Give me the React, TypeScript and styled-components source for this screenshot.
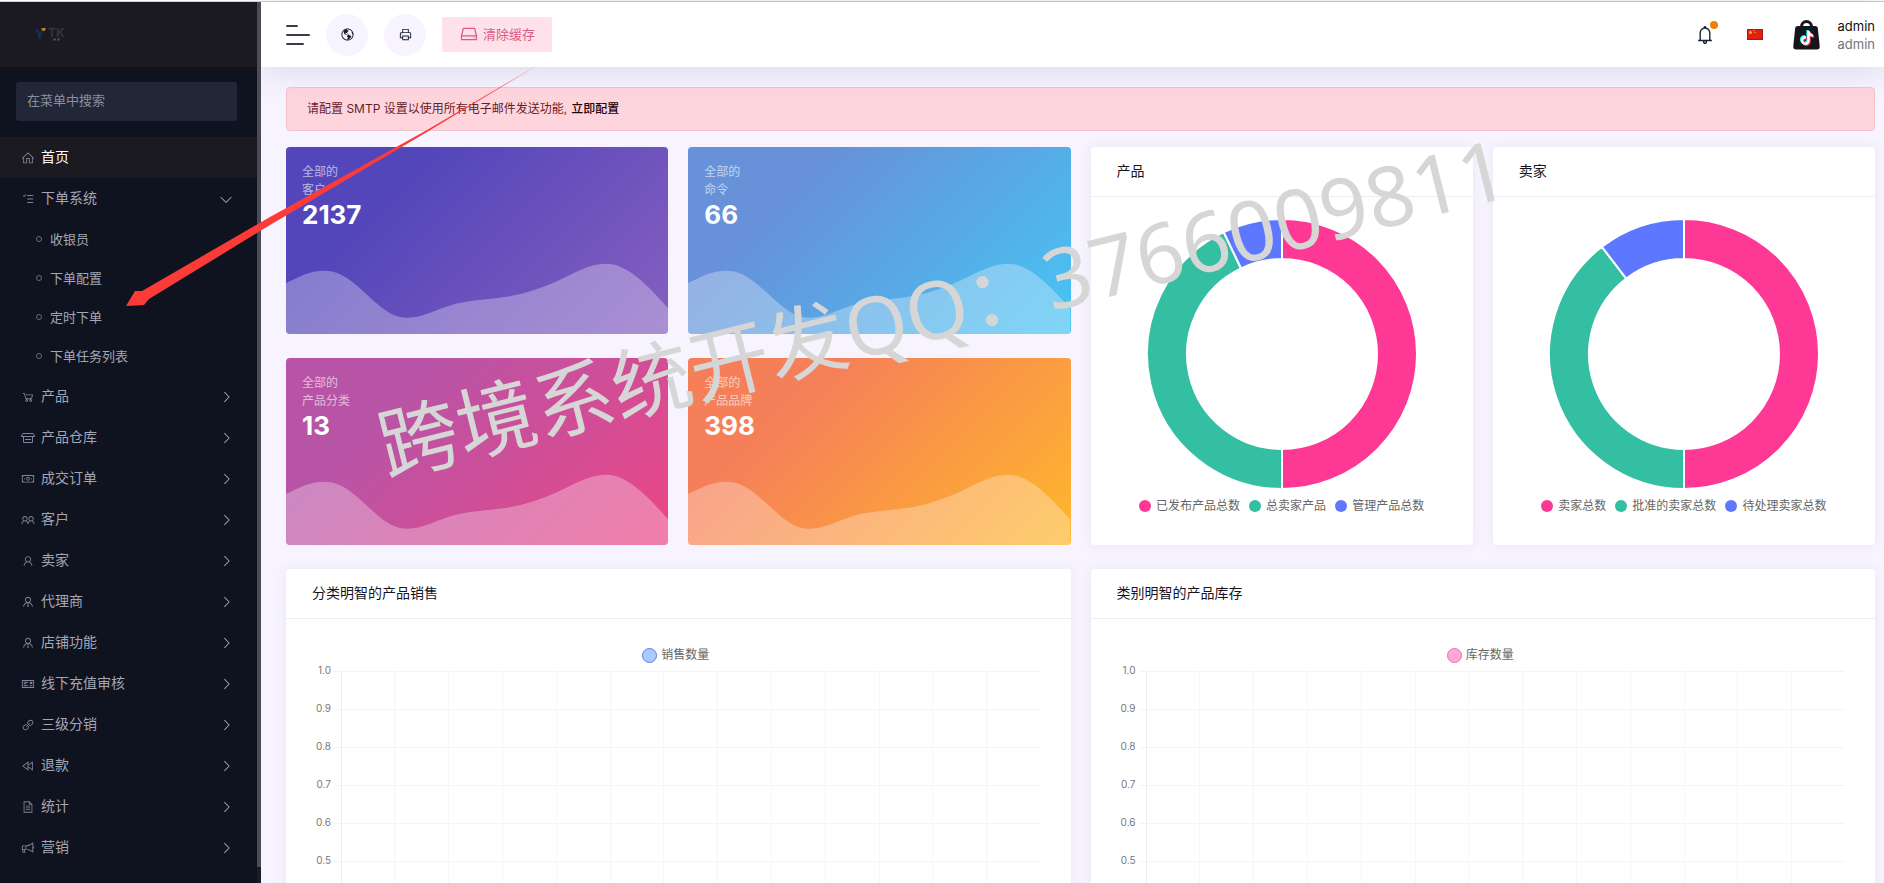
import React from "react";
import styled, { createGlobalStyle } from "styled-components";
import type { IconType } from "react-icons";
import { FaTiktok } from "react-icons/fa6";
import {
  LiaAngleDownSolid,
  LiaAngleRightSolid,
  LiaBackwardSolid,
  LiaBell,
  LiaBullhornSolid,
  LiaFileAltSolid,
  LiaGlobeAmericasSolid,
  LiaHddSolid,
  LiaHomeSolid,
  LiaLinkSolid,
  LiaMoneyBillSolid,
  LiaMoneyCheckSolid,
  LiaPrintSolid,
  LiaShoppingCartSolid,
  LiaTasksSolid,
  LiaUserFriendsSolid,
  LiaUserSolid,
  LiaUserTieSolid,
} from "react-icons/lia";

const GlobalStyle = createGlobalStyle`
  *, *::before, *::after { box-sizing: border-box; }
  body {
    margin: 0;
    background: #f7f4ff;
    color: #1b1b28;
    font: 400 12px/18px Inter, "Noto Sans CJK SC", sans-serif;
  }
  button, input { font: inherit; }
  a { color: inherit; text-decoration: none; }
  ul { list-style: none; margin: 0; padding: 0; }
  h2, p { margin: 0; font: inherit; }
`;

const Shell = styled.div`
  position: relative;
  display: flex;
  height: 100vh;
  overflow: hidden;
  padding-top: 2px;
  background: linear-gradient(#fff 0 1px, #cfd0d0 1px 2px, transparent 2px);
`;

/* ---------- sidebar ---------- */

const Sidebar = styled.aside`
  position: relative;
  z-index: 2;
  display: flex;
  flex: none;
  width: 261px;
  background: #0f131f;
`;

const SidebarBody = styled.div`
  flex: 1;
  min-width: 0;
  overflow: hidden;
`;

const SidebarTrack = styled.div`
  width: 4px;
  padding-bottom: 16px;
  background: #1a1b24;
  &::before {
    content: "";
    display: block;
    height: 100%;
    background: #4c4a56;
  }
`;

const Brand = styled.a`
  display: flex;
  align-items: center;
  height: 65px;
  padding-left: 34px;
  background: #1a1a20;
`;

const SearchBox = styled.input`
  display: block;
  width: calc(100% - 36px);
  height: 39px;
  margin: 15px 20px 16px 16px;
  padding: 0 11px 4px;
  border: 0;
  border-radius: 3px;
  background: #212737;
  color: #a2a5b5;
  font-size: 13px;
  &::placeholder { color: #8b8e9d; opacity: 1; }
`;

const MenuLink = styled.a<{ $active?: boolean }>`
  display: flex;
  align-items: center;
  height: 41px;
  padding: 0 24px 0 21px;
  background: ${(p) => (p.$active ? "#1a1a20" : "transparent")};
  color: ${(p) => (p.$active ? "#fff" : "#a4a6b4")};
  font-size: 14px;
  line-height: 20px;
`;

const MenuIcon = styled.span`
  display: flex;
  width: 14px;
  margin-right: 6px;
  color: #7f829b;
`;

const MenuText = styled.span`
  flex: 1;
  padding-bottom: 2px;
`;

const SubLink = styled.a`
  display: flex;
  align-items: center;
  gap: 8px;
  height: 39px;
  padding-left: 36px;
  color: #a4a6b4;
  font-size: 13px;
  &::before {
    content: "";
    width: 6px;
    height: 6px;
    border: 1px solid #666a80;
    border-radius: 50%;
  }
`;

const SubList = styled.ul`
  padding-bottom: 1px;
`;

/* ---------- page ---------- */

const Page = styled.div`
  display: flex;
  flex: 1;
  flex-direction: column;
  min-width: 0;
`;

const TopBar = styled.header`
  position: relative;
  z-index: 1;
  display: flex;
  flex: none;
  align-items: center;
  height: 65px;
  padding: 0 9px 0 25px;
  background: #fff;
  box-shadow: 0 0 35px rgba(100, 105, 140, 0.24);
`;

const MenuToggle = styled.button`
  display: flex;
  flex-direction: column;
  gap: 7px;
  width: 24px;
  margin-right: 16px;
  padding: 0;
  border: 0;
  background: none;
`;

const Bar = styled.span<{ $w: number }>`
  width: ${(p) => p.$w}px;
  height: 2px;
  border-radius: 1px;
  background: #3a3b47;
`;

const RoundButton = styled.button`
  display: flex;
  align-items: center;
  justify-content: center;
  width: 42px;
  height: 42px;
  margin-right: 16px;
  padding: 0;
  border: 0;
  border-radius: 50%;
  background: #f7f4ff;
  color: #1b2133;
`;

const ClearButton = styled.button`
  display: flex;
  align-items: center;
  gap: 4px;
  height: 35px;
  padding: 0 17px 1px;
  border: 0;
  border-radius: 2px;
  background: #ffe1eb;
  color: #dc5a86;
  font-size: 13px;
`;

const TopRight = styled.div`
  display: flex;
  align-items: center;
  margin-left: auto;
`;

const BellButton = styled.button`
  position: relative;
  display: flex;
  padding: 0;
  border: 0;
  background: none;
  color: #1b2133;
`;

const Dot = styled.span`
  position: absolute;
  top: -3px;
  right: -2px;
  width: 8px;
  height: 8px;
  border-radius: 50%;
  background: #ef7f0a;
`;

const FlagButton = styled.button`
  display: flex;
  margin: 0 30px 0 31px;
  padding: 0;
  border: 0;
  background: none;
`;

const Account = styled.a`
  display: flex;
  align-items: center;
  gap: 18px;
`;

const AccountText = styled.span<{ $muted?: boolean }>`
  display: block;
  color: ${(p) => (p.$muted ? "#74747c" : "#111")};
  font-size: 13px;
`;

const Content = styled.main`
  flex: 1;
  min-height: 0;
  overflow: auto;
  scrollbar-width: none;
  padding: 20px 9px 25px 25px;
`;

const Alert = styled.p`
  display: flex;
  align-items: center;
  gap: 4px;
  height: 44px;
  margin-bottom: 16px;
  padding: 0 20px;
  border: 1px solid #f3c3cd;
  border-radius: 4px;
  background: #ffd5dd;
  color: #661c2a;
`;

const AlertLink = styled.a`
  color: #1b0508;
  font-weight: 500;
`;

const Dashboard = styled.div`
  display: grid;
  grid-template-columns: repeat(4, minmax(0, 1fr));
  column-gap: 20px;
  row-gap: 24px;
`;

const Stats = styled.div`
  grid-column: span 2;
  display: grid;
  grid-template-columns: repeat(2, minmax(0, 1fr));
  gap: 24px 20px;
`;

const StatCard = styled.section<{ $from: string; $to: string }>`
  display: flex;
  flex-direction: column;
  justify-content: space-between;
  height: 187px;
  overflow: hidden;
  border-radius: 4px;
  background: linear-gradient(315deg, ${(p) => p.$from} 0%, ${(p) => p.$to} 74%);
  color: #fff;
`;

const StatHead = styled.div`
  padding: 16px 16px 0;
`;

const StatLabel = styled.p`
  opacity: 0.6;
`;

const StatValue = styled.p`
  font-size: 26px;
  font-weight: 700;
  line-height: 32px;
`;

const Wave = styled.svg`
  display: block;
  width: 100%;
`;

const Card = styled.section<{ $span: number }>`
  grid-column: span ${(p) => p.$span};
  border-radius: 4px;
  background: #fff;
  box-shadow: 0 0 13px rgba(82, 63, 105, 0.08);
`;

const CardTitle = styled.h2`
  height: 50px;
  padding: 0 26px;
  border-bottom: 1px solid #ebedf2;
  color: #14141f;
  font-size: 14px;
  line-height: 48px;
`;

const DonutBody = styled.div`
  display: flex;
  flex-direction: column;
  align-items: center;
  padding-top: 22px;
`;

const Legend = styled.ul`
  display: flex;
  justify-content: center;
  gap: 9px;
  margin-top: 8px;
`;

const LegendItem = styled.li<{ $color: string }>`
  display: flex;
  align-items: center;
  gap: 5px;
  color: #666;
  &::before {
    content: "";
    width: 12px;
    height: 12px;
    border-radius: 50%;
    background: ${(p) => p.$color};
  }
`;

const SeriesLegend = styled.div<{ $fill: string; $line: string }>`
  display: flex;
  align-items: center;
  justify-content: center;
  gap: 4px;
  margin-bottom: 6px;
  color: #666;
  &::before {
    content: "";
    width: 15px;
    height: 15px;
    border: 1px solid ${(p) => p.$line};
    border-radius: 50%;
    background: ${(p) => p.$fill};
  }
`;

const ChartBody = styled.div`
  padding: 27px 30px 25px 25px;
`;

const ChartRow = styled.div`
  display: flex;
`;

const Ticks = styled.div`
  width: 20px;
  margin-top: -6px;
  color: #777;
  font-size: 10px;
  line-height: 12px;
  text-align: right;
`;

const Tick = styled.div`
  height: 38px;
`;

const Plot = styled.svg`
  flex: 1;
  min-width: 0;
  height: 400px;
  margin-left: 3px;
`;

/* ---------- overlays ---------- */

const Watermark = styled.div`
  position: absolute;
  z-index: 3;
  top: 384px;
  left: 394px;
  color: #d6d6d6;
  font: 400 80px/120px "Noto Sans", "Noto Sans CJK SC", sans-serif;
  white-space: nowrap;
  pointer-events: none;
  transform: rotate(-14deg);
  transform-origin: 0 100%;
`;

const WatermarkNumber = styled.span`
  font-size: 83px;
`;

const Arrow = styled.svg`
  position: absolute;
  z-index: 4;
  top: 60px;
  left: 120px;
  pointer-events: none;
`;

/* ---------- icons ---------- */

const BoxIcon = ({ size = 14 }: { size?: number }) => (
  <svg width={size} height={size} viewBox="0 0 14 14" fill="none" stroke="currentColor">
    <path d="M2 2.5h10M2 2.5.5 5M12 2.5 13.5 5M0 5.500h14M2.500 5.500v6h9v-6M4 8.500h6" />
  </svg>
);

const BrandMark = () => (
  <svg width="34" height="18" viewBox="0 0 34 18" role="img" aria-label="TK">
    <path d="M1 3h3l2 4 2-3 1 2-2 3v4H4V8z" fill="#1d2a48" />
    <path d="M7 2h5l-1 3H8z" fill="#8f6c2c" />
    <path d="M9 3h2" stroke="#c9b98a" />
    <text x="14" y="11" fontSize="12" fontWeight="700" fill="#34353b">TK</text>
    <path d="M19 13.500h7" stroke="#4a4b50" strokeWidth="2" strokeDasharray="3 1" />
  </svg>
);

const Flag = () => (
  <svg width="16" height="11" viewBox="0 0 16 11" role="img" aria-label="中文">
    <path fill="#df2110" d="M0 0h16v11H0z" />
    <path d="M.5.5h15v10H.5z" fill="none" stroke="#a81b12" />
    <path fill="#ffcf3a" d="m3.500 1.500.6 1.300h1.400l-1.100.9.400 1.500-1.300-.9-1.300.9.400-1.500-1.100-.9h1.400zM6.500 1h1v1h-1zM7.500 3h1v1h-1z" />
  </svg>
);

const Bag = () => (
  <svg width="27" height="30" viewBox="0 0 27 30" aria-hidden="true">
    <path d="M8.500 9V6.500a5 5 0 0 1 10 0V9" fill="none" stroke="#16161a" strokeWidth="3" />
    <path d="M5 6h17q2.500 0 2.800 2l1.900 18q.3 3.500-3 3.500H3.300q-3.300 0-3-3.500L2.200 8Q2.500 6 5 6z" fill="#16161a" />
    <FaTiktok x="6" y="10" size={14} color="#25f4ee" />
    <FaTiktok x="8" y="12" size={14} color="#fe2c55" />
    <FaTiktok x="7" y="11" size={14} color="#fff" />
  </svg>
);

/* ---------- data ---------- */

const orderLinks = ["收银员", "下单配置", "定时下单", "下单任务列表"];

const menu: { icon: IconType | typeof BoxIcon; label: string }[] = [
  { icon: LiaShoppingCartSolid, label: "产品" },
  { icon: BoxIcon, label: "产品仓库" },
  { icon: LiaMoneyBillSolid, label: "成交订单" },
  { icon: LiaUserFriendsSolid, label: "客户" },
  { icon: LiaUserSolid, label: "卖家" },
  { icon: LiaUserTieSolid, label: "代理商" },
  { icon: LiaUserTieSolid, label: "店铺功能" },
  { icon: LiaMoneyCheckSolid, label: "线下充值审核" },
  { icon: LiaLinkSolid, label: "三级分销" },
  { icon: LiaBackwardSolid, label: "退款" },
  { icon: LiaFileAltSolid, label: "统计" },
  { icon: LiaBullhornSolid, label: "营销" },
];

const stats = [
  { label: "客户", value: 2137, from: "#875fc0", to: "#5346ba" },
  { label: "命令", value: 66, from: "#47c5f4", to: "#6791d9" },
  { label: "产品分类", value: 13, from: "#eb4786", to: "#b854a6" },
  { label: "产品品牌", value: 398, from: "#ffb72c", to: "#f57f59" },
];

type Slice = { label: string; share: number; color: string };

const PINK = "#fd3995";
const GREEN = "#34bfa3";
const BLUE = "#5d78ff";

const donuts: { title: string; slices: Slice[] }[] = [
  {
    title: "产品",
    slices: [
      { label: "已发布产品总数", share: 0.5, color: PINK },
      { label: "总卖家产品", share: 0.429, color: GREEN },
      { label: "管理产品总数", share: 0.071, color: BLUE },
    ],
  },
  {
    title: "卖家",
    slices: [
      { label: "卖家总数", share: 0.5, color: PINK },
      { label: "批准的卖家总数", share: 0.396, color: GREEN },
      { label: "待处理卖家总数", share: 0.104, color: BLUE },
    ],
  },
];

const charts = [
  { title: "分类明智的产品销售", series: "销售数量", fill: "#a9cbff", line: "#5b7fe8" },
  { title: "类别明智的产品库存", series: "库存数量", fill: "#ffa8d3", line: "#ee6fae" },
];

const ticks = ["1.0", "0.9", "0.8", "0.7", "0.6", "0.5"];
const ROWS = 11;
const COLUMNS = 13;

/* ---------- charts ---------- */

const point = (r: number, share: number) => {
  const a = share * 2 * Math.PI;
  return `${135 + r * Math.sin(a)} ${135 - r * Math.cos(a)}`;
};

const Donut = ({ slices }: { slices: Slice[] }) => {
  let start = 0;
  return (
    <svg width="270" height="270" viewBox="0 0 270 270" aria-hidden="true">
      {slices.map((s) => {
        const a = start;
        const b = (start += s.share);
        return (
          <path
            key={s.label}
            d={`M${point(135, a)} A135 135 0 0 1 ${point(135, b)} L${point(95, b)} A95 95 0 0 0 ${point(95, a)}Z`}
            fill={s.color}
            stroke="#fff"
            strokeWidth="2"
          />
        );
      })}
    </svg>
  );
};

const PlotGrid = () => (
  <Plot aria-hidden="true">
    <g stroke="#f4f4f8" strokeWidth="1" shapeRendering="crispEdges">
      {Array.from({ length: ROWS }, (_, i) => (
        <line key={i} x1="0" x2="100%" y1={i * 38 + 1} y2={i * 38 + 1} />
      ))}
      <svg x="7" y="0" overflow="visible">
        {Array.from({ length: COLUMNS }, (_, i) => (
          <line
            key={i}
            x1={`${(i * 99) / COLUMNS}%`}
            x2={`${(i * 99) / COLUMNS}%`}
            y1="1"
            y2="388"
            stroke={i ? "#f6f6fa" : "#ececf1"}
          />
        ))}
      </svg>
    </g>
  </Plot>
);

export default function App() {
  return (
    <>
      <GlobalStyle />
      <Shell>
        <Sidebar>
          <SidebarBody>
            <Brand href="#">
              <BrandMark />
            </Brand>
            <SearchBox type="search" placeholder="在菜单中搜索" aria-label="在菜单中搜索" />
            <nav>
              <ul>
                <li>
                  <MenuLink href="#" $active>
                    <MenuIcon><LiaHomeSolid size={14} /></MenuIcon>
                    <MenuText>首页</MenuText>
                  </MenuLink>
                </li>
                <li>
                  <MenuLink href="#">
                    <MenuIcon><LiaTasksSolid size={14} /></MenuIcon>
                    <MenuText>下单系统</MenuText>
                    <LiaAngleDownSolid size={14} />
                  </MenuLink>
                  <SubList>
                    {orderLinks.map((l) => (
                      <li key={l}><SubLink href="#">{l}</SubLink></li>
                    ))}
                  </SubList>
                </li>
                {menu.map(({ icon: Icon, label }) => (
                  <li key={label}>
                    <MenuLink href="#">
                      <MenuIcon><Icon size={14} /></MenuIcon>
                      <MenuText>{label}</MenuText>
                      <LiaAngleRightSolid size={14} />
                    </MenuLink>
                  </li>
                ))}
              </ul>
            </nav>
          </SidebarBody>
          <SidebarTrack />
        </Sidebar>

        <Page>
          <TopBar>
            <MenuToggle aria-label="菜单">
              <Bar $w={12} />
              <Bar $w={24} />
              <Bar $w={18} />
            </MenuToggle>
            <RoundButton aria-label="浏览网站"><LiaGlobeAmericasSolid size={15} /></RoundButton>
            <RoundButton aria-label="打印"><LiaPrintSolid size={15} /></RoundButton>
            <ClearButton>
              <LiaHddSolid size={20} />
              清除缓存
            </ClearButton>
            <TopRight>
              <BellButton aria-label="通知">
                <LiaBell size={22} />
                <Dot />
              </BellButton>
              <FlagButton aria-label="语言"><Flag /></FlagButton>
              <Account href="#">
                <Bag />
                <span>
                  <AccountText>admin</AccountText>
                  <AccountText $muted>admin</AccountText>
                </span>
              </Account>
            </TopRight>
          </TopBar>

          <Content>
            <Alert>
              请配置 SMTP 设置以使用所有电子邮件发送功能,
              <AlertLink href="#">立即配置</AlertLink>
            </Alert>
            <Dashboard>
              <Stats>
                {stats.map((s) => (
                  <StatCard key={s.label} $from={s.from} $to={s.to}>
                    <StatHead>
                      <StatLabel>全部的</StatLabel>
                      <StatLabel>{s.label}</StatLabel>
                      <StatValue>{s.value}</StatValue>
                    </StatHead>
                    <Wave viewBox="0 0 1440 320" aria-hidden="true">
                      <path
                        fill="rgba(255,255,255,0.3)"
                        d="M0,128L34.3,112C68.6,96,137,64,206,96C274.3,128,343,224,411,250.7C480,277,549,235,617,213.3C685.7,192,754,192,823,181.3C891.4,171,960,149,1029,117.3C1097.1,85,1166,43,1234,58.7C1302.9,75,1371,149,1406,186.7L1440,224L1440,320L0,320Z"
                      />
                    </Wave>
                  </StatCard>
                ))}
              </Stats>
              {donuts.map((d) => (
                <Card key={d.title} $span={1}>
                  <CardTitle>{d.title}</CardTitle>
                  <DonutBody>
                    <Donut slices={d.slices} />
                    <Legend>
                      {d.slices.map((s) => (
                        <LegendItem key={s.label} $color={s.color}>{s.label}</LegendItem>
                      ))}
                    </Legend>
                  </DonutBody>
                </Card>
              ))}
              {charts.map((c) => (
                <Card key={c.title} $span={2}>
                  <CardTitle>{c.title}</CardTitle>
                  <ChartBody>
                    <SeriesLegend $fill={c.fill} $line={c.line}>{c.series}</SeriesLegend>
                    <ChartRow>
                      <Ticks>
                        {ticks.map((t) => <Tick key={t}>{t}</Tick>)}
                      </Ticks>
                      <PlotGrid />
                    </ChartRow>
                  </ChartBody>
                </Card>
              ))}
            </Dashboard>
          </Content>
        </Page>

        <Watermark>
          跨境系统开发QQ：<WatermarkNumber>3766009811</WatermarkNumber>
        </Watermark>
        <Arrow width="424" height="250" viewBox="120 60 424 250" aria-hidden="true">
          <path d="M541 63 427 132 270 225 149 299 144 305 126 306 135 291 142 291 270 217 427 130Z" fill="#fb3b38" />
        </Arrow>
      </Shell>
    </>
  );
}
